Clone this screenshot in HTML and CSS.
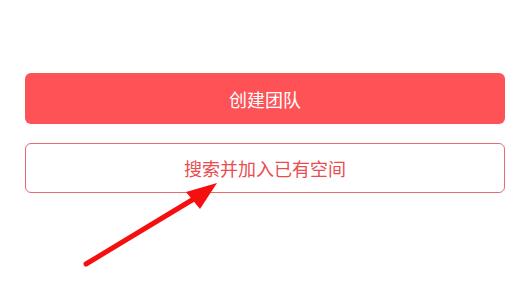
FILE: index.html
```html
<!DOCTYPE html>
<html lang="zh">
<head>
  <meta charset="utf-8">
  <link rel="stylesheet" href="styles.css">
</head>
<body>
  <div class="actions">
    <button class="btn btn-primary">创建团队</button>
    <button class="btn btn-outline">搜索并加入已有空间</button>
  </div>

  <svg class="arrow" width="530" height="281" viewBox="0 0 530 281">
    <line x1="86" y1="264" x2="197" y2="197" stroke="#f50f0f" stroke-width="5" stroke-linecap="round"/>
    <polygon points="217,183 186,192 200,209" fill="#f50f0f"/>
  </svg>
</body>
</html>
```

FILE: styles.css
```css
body {
  margin: 0;
  background: #fff;
  font-family: "Noto Sans CJK SC", "Noto Sans", sans-serif;
}

.actions {
  display: flex;
  flex-direction: column;
  gap: 19px;
  padding: 73px 25px 0;
}

.btn {
  display: flex;
  align-items: center;
  justify-content: center;
  width: 100%;
  border-radius: 6px;
  font-family: inherit;
  font-size: 18px;
  line-height: 1;
  padding: 0;
}

.btn-primary {
  height: 51px;
  background: #fe5256;
  border: none;
  color: #fff;
}

.btn-outline {
  height: 50px;
  background: #fff;
  border: 1.5px solid #e86b6e;
  color: #ea4c50;
}

.arrow {
  position: absolute;
  top: 0;
  left: 0;
  pointer-events: none;
}
```
